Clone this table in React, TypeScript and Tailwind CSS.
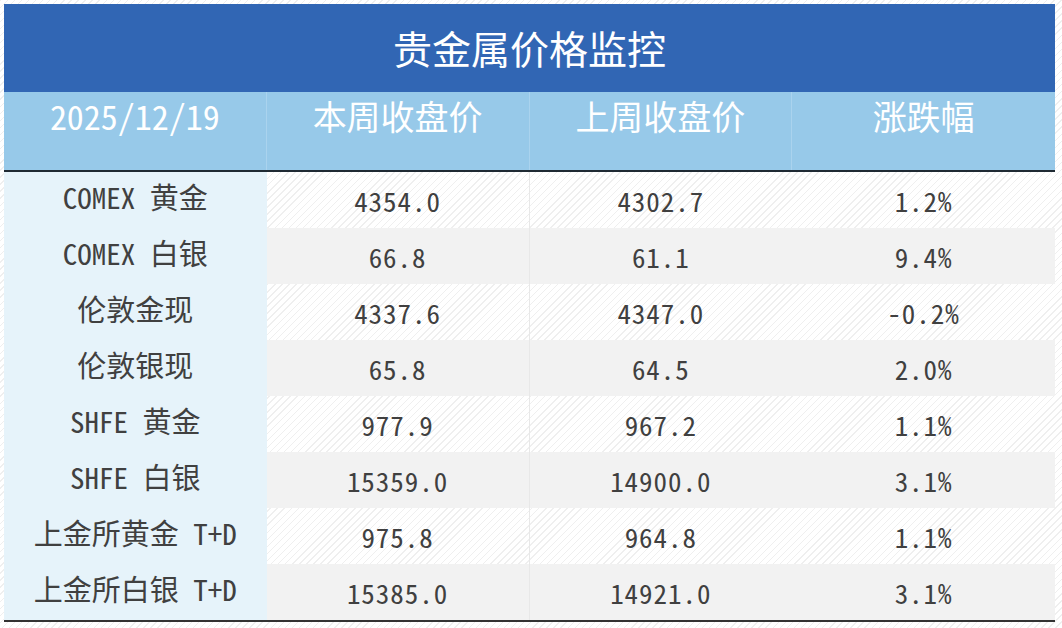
const rows = [
  { name: 'COMEX 黄金', cur: '4354.0', prev: '4302.7', chg: '1.2%' },
  { name: 'COMEX 白银', cur: '66.8', prev: '61.1', chg: '9.4%' },
  { name: '伦敦金现', cur: '4337.6', prev: '4347.0', chg: '-0.2%' },
  { name: '伦敦银现', cur: '65.8', prev: '64.5', chg: '2.0%' },
  { name: 'SHFE 黄金', cur: '977.9', prev: '967.2', chg: '1.1%' },
  { name: 'SHFE 白银', cur: '15359.0', prev: '14900.0', chg: '3.1%' },
  { name: '上金所黄金 T+D', cur: '975.8', prev: '964.8', chg: '1.1%' },
  { name: '上金所白银 T+D', cur: '15385.0', prev: '14921.0', chg: '3.1%' },
];

const font = "font-['Noto_Sans_Mono_CJK_SC','Noto_Sans_CJK_SC',monospace]";

export default function App() {
  return (
    <div className="w-[1062px] h-[628px] bg-[repeating-linear-gradient(135deg,#efefef_0px,#efefef_1px,#ffffff_1px,#ffffff_5px)] pl-[4px] pt-[4px]">
      <div className={`w-[1051px] ${font}`}>
        <div className="h-[88px] bg-[#3166b4] flex items-center justify-center text-white text-[39px] font-medium pb-[2px]">
          贵金属价格监控
        </div>
        <div className="grid grid-cols-4 h-[80px] bg-[#97c9e9] border-b-2 border-[#1f2a33]">
          {['2025/12/19', '本周收盘价', '上周收盘价', '涨跌幅'].map((h, i) => (
            <div
              key={h}
              className={`flex justify-center text-white text-[34px] leading-[48px] ${i < 3 ? 'border-r border-[#aad3ee]' : ''}`}
            >
              {h}
            </div>
          ))}
        </div>
        <div className="border-b-2 border-[#333]">
          {rows.map((r, idx) => {
            const odd = idx % 2 === 0;
            return (
              <div key={r.name} className={`grid grid-cols-4 h-[56px] text-[#404040] ${odd ? '' : 'bg-[#f2f2f2]'}`}>
                <div className="bg-[#e6f3fa] flex justify-center items-center pb-[6px] text-[29px]">{r.name}</div>
                <div className="flex justify-center items-center text-[27px] tracking-[1px] pt-[2px] border-r border-[#e8e8e8]">{r.cur}</div>
                <div className="flex justify-center items-center text-[27px] tracking-[1px] pt-[2px]">{r.prev}</div>
                <div className="flex justify-center items-center text-[27px] tracking-[1px] pt-[2px]">{r.chg}</div>
              </div>
            );
          })}
        </div>
      </div>
    </div>
  );
}
